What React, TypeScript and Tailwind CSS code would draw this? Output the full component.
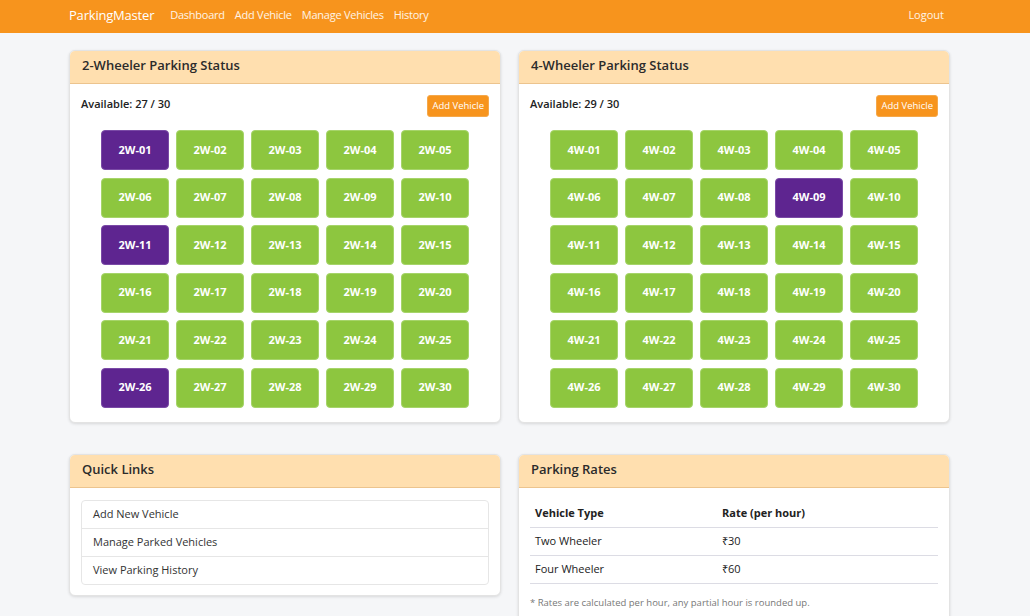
import React from 'react';

const pad = (n: number) => (n < 10 ? `0${n}` : `${n}`);

const twoOccupied = [1, 11, 26];
const fourOccupied = [9];

interface ParkingCardProps {
  title: string;
  prefix: string;
  occupied: number[];
}

const ParkingCard: React.FC<ParkingCardProps> = ({ title, prefix, occupied }) => {
  const slots = Array.from({ length: 30 }, (_, i) => i + 1);
  return (
    <div className="bg-white rounded-md border border-[#e3e3e3] shadow-[0_1px_3px_rgba(0,0,0,0.12)] overflow-hidden">
      <div className="bg-[#ffdfaf] h-[33px] px-3 flex items-center border-b border-[#ecc48e]">
        <h2 className="text-[13px] font-semibold text-[#2b2b2b] -mt-[2px]">{title}</h2>
      </div>
      <div className="px-[11px] pt-[11px] pb-[14px]">
        <div className="flex justify-between items-start">
          <p className="text-[11px] font-semibold text-[#222] mt-[1px]">
            Available: {30 - occupied.length} / 30
          </p>
          <button className="bg-[#f7941d] text-white text-[9.5px] h-[22px] px-[4px] rounded-[3px] border border-[#f5a84a]">
            Add Vehicle
          </button>
        </div>
        <div className="mt-[13px] grid grid-cols-[repeat(5,68px)] justify-center gap-x-[7px] gap-y-[7.5px]">
          {slots.map((n) => {
            const taken = occupied.includes(n);
            return (
              <div
                key={n}
                className={`h-[40px] rounded-[4px] flex items-center justify-center text-white text-[11px] font-bold border ${
                  taken ? 'bg-[#5e2590] border-[#7a4aa6]' : 'bg-[#8dc63f] border-[#a6d46a]'
                }`}
              >
                {prefix}-{pad(n)}
              </div>
            );
          })}
        </div>
      </div>
    </div>
  );
};

const App: React.FC = () => {
  return (
    <div className="min-h-screen w-[1030px] bg-[#f5f6f8] font-['Open_Sans',sans-serif] text-[#222]">
      <nav className="bg-[#f7941d] h-[33px] w-full">
        <div className="w-[1019px]">
          <div className="w-[881px] mx-auto h-[33px] flex items-center justify-between">
            <div className="flex items-center -mt-[2px]">
              <span className="text-white text-[13px] tracking-[-0.2px]">ParkingMaster</span>
              <div className="flex items-center ml-[11px] text-[11px] text-white/90 tracking-[-0.25px]">
                <a href="#" className="px-[5px]">Dashboard</a>
                <a href="#" className="px-[5px]">Add Vehicle</a>
                <a href="#" className="px-[5px]">Manage Vehicles</a>
                <a href="#" className="px-[5px]">History</a>
              </div>
            </div>
            <a href="#" className="text-white/90 text-[11px] pr-[6px] -mt-[2px]">Logout</a>
          </div>
        </div>
      </nav>

      <div className="w-[1019px]">
        <main className="w-[881px] mx-auto pt-[17px]">
          <div className="grid grid-cols-2 gap-x-[17px]">
            <ParkingCard title="2-Wheeler Parking Status" prefix="2W" occupied={twoOccupied} />
            <ParkingCard title="4-Wheeler Parking Status" prefix="4W" occupied={fourOccupied} />
          </div>

          <div className="grid grid-cols-2 gap-x-[17px] mt-[31px] items-start">
            <div className="bg-white rounded-md border border-[#e3e3e3] shadow-[0_1px_3px_rgba(0,0,0,0.12)] overflow-hidden">
              <div className="bg-[#ffdfaf] h-[33px] px-3 flex items-center border-b border-[#ecc48e]">
                <h2 className="text-[13px] font-semibold text-[#2b2b2b] -mt-[2px]">Quick Links</h2>
              </div>
              <div className="px-[11px] pt-[12px] pb-[10px]">
                <ul className="border border-[#e6e6e6] rounded-[4px] text-[11px] text-[#333]">
                  <li className="h-[28px] px-[11px] flex items-center border-b border-[#e6e6e6]">Add New Vehicle</li>
                  <li className="h-[28px] px-[11px] flex items-center border-b border-[#e6e6e6]">Manage Parked Vehicles</li>
                  <li className="h-[27px] px-[11px] flex items-center">View Parking History</li>
                </ul>
              </div>
            </div>

            <div className="bg-white rounded-md border border-[#e3e3e3] shadow-[0_1px_3px_rgba(0,0,0,0.12)] overflow-hidden">
              <div className="bg-[#ffdfaf] h-[33px] px-3 flex items-center border-b border-[#ecc48e]">
                <h2 className="text-[13px] font-semibold text-[#2b2b2b] -mt-[2px]">Parking Rates</h2>
              </div>
              <div className="px-[11px] pt-[12px] pb-[12px]">
                <table className="w-full text-[11px] text-[#222]">
                  <thead>
                    <tr className="h-[28px] border-b border-[#dcdce4]">
                      <th className="text-left font-bold px-[5px] w-[187px]">Vehicle Type</th>
                      <th className="text-left font-bold px-[5px]">Rate (per hour)</th>
                    </tr>
                  </thead>
                  <tbody>
                    <tr className="h-[28px] border-b border-[#dcdce4]">
                      <td className="px-[5px]">Two Wheeler</td>
                      <td className="px-[5px]">₹30</td>
                    </tr>
                    <tr className="h-[28px] border-b border-[#dcdce4]">
                      <td className="px-[5px]">Four Wheeler</td>
                      <td className="px-[5px]">₹60</td>
                    </tr>
                  </tbody>
                </table>
                <p className="text-[9.5px] text-[#777] mt-[12px]">
                  * Rates are calculated per hour, any partial hour is rounded up.
                </p>
              </div>
            </div>
          </div>
        </main>
      </div>
    </div>
  );
};

export default App;
